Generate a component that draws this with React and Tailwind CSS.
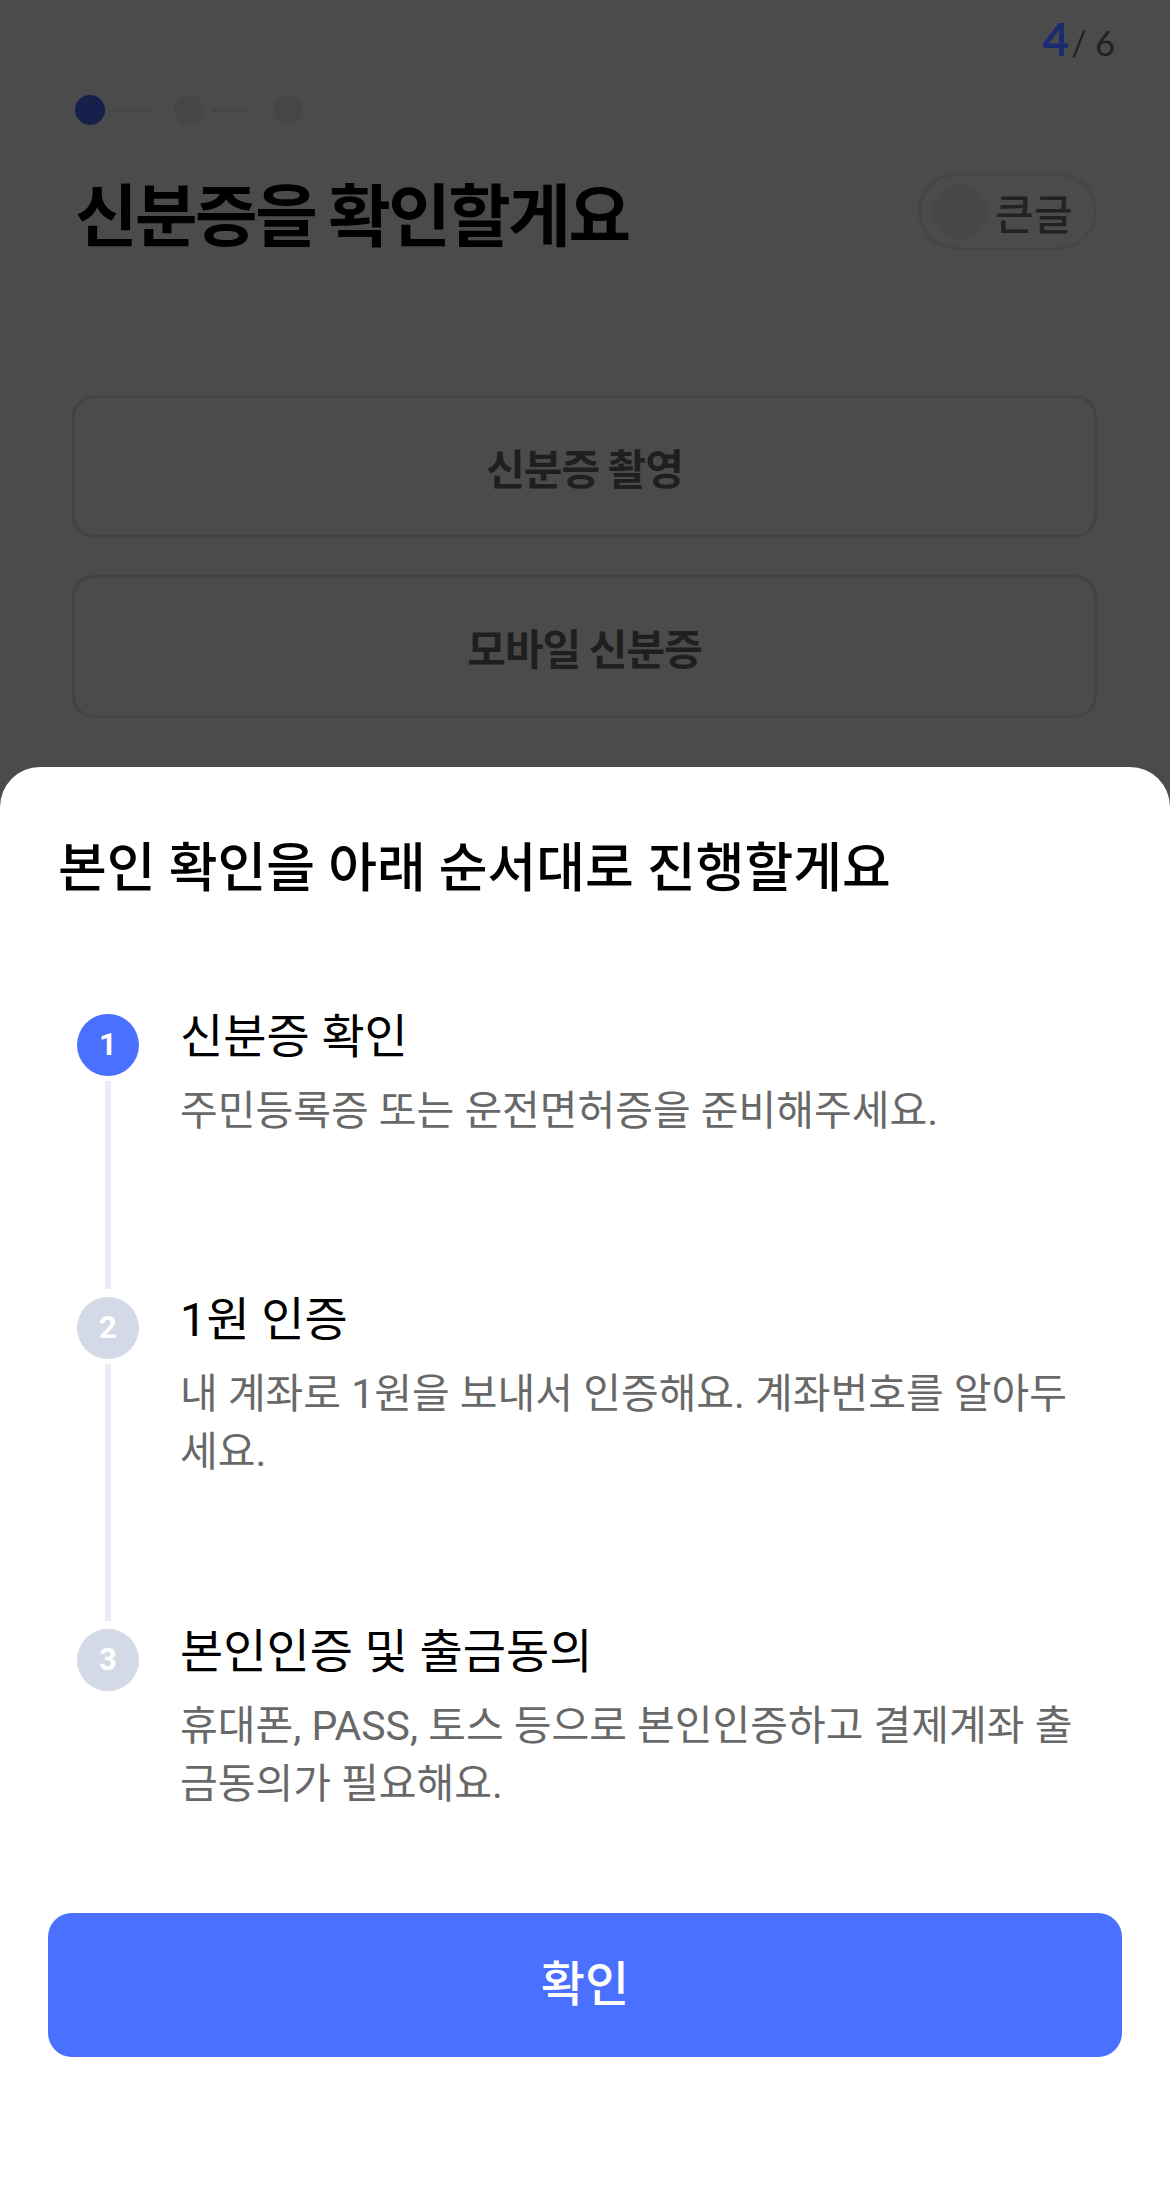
import React from "react";

const steps = [
  {
    n: 1,
    title: "신분증 확인",
    desc: "주민등록증 또는 운전면허증을 준비해주세요.",
    active: true,
    pad: "pb-[152px]",
  },
  {
    n: 2,
    title: "1원 인증",
    desc: "내 계좌로 1원을 보내서 인증해요. 계좌번호를 알아두세요.",
    pad: "pb-[143px]",
  },
  {
    n: 3,
    title: "본인인증 및 출금동의",
    desc: "휴대폰, PASS, 토스 등으로 본인인증하고 결제계좌 출금동의가 필요해요.",
    last: true,
    pad: "",
  },
];

function Progress() {
  return (
    <div className="flex items-center">
      <div className="w-[30px] h-[30px] rounded-full bg-[#16214b]" />
      <div className="w-[36px] h-[3px] ml-[9px] mr-[24px] bg-[#454545]" />
      <div className="w-[30px] h-[30px] rounded-full bg-[#464646]" />
      <div className="w-[36px] h-[3px] ml-[9px] mr-[24px] bg-[#454545]" />
      <div className="w-[30px] h-[30px] rounded-full bg-[#464646]" />
    </div>
  );
}

function Step({ step }) {
  return (
    <div className="flex">
      <div className="flex flex-col items-center w-[62px] shrink-0">
        <div
          className={`mt-[5px] w-[62px] h-[62px] rounded-full flex items-center justify-center text-white text-[31px] font-bold ${
            step.active ? "bg-[#4a70ff]" : "bg-[#d3d9e6]"
          }`}
        >
          {step.n}
        </div>
        {!step.last && (
          <div className="flex-1 w-[6px] mt-[5px] mb-[3px] bg-[#e9edf7]" />
        )}
      </div>
      <div className={`pl-[41px] ${step.pad}`}>
        <div className="h-[56px] text-[47px] leading-[56px] text-black">
          {step.title}
        </div>
        <div className="mt-[17px] text-[41px] leading-[58px] text-[#686868]">
          {step.desc}
        </div>
      </div>
    </div>
  );
}

export default function App() {
  return (
    <div className="relative w-[1170px] h-[2207px] overflow-hidden bg-[#4b4b4b] font-['Roboto','Noto_Sans_CJK_KR',sans-serif]">
      {/* dimmed page behind the sheet */}
      <div className="flex justify-end items-baseline pt-[16px] pr-[55px] font-['Lato',sans-serif]">
        <span className="text-[46px] font-bold text-[#1b2b70] leading-none">4</span>
        <span className="ml-[2px] text-[34px] text-[#222] leading-none">/ 6</span>
      </div>
      <div className="px-[75px]">
        <div className="mt-[33px]">
          <Progress />
        </div>
        <div className="mt-[48px] flex items-center justify-between">
          <h1 className="text-[68px] font-bold text-black tracking-[-2.5px] leading-none font-['Noto_Sans_CJK_KR',sans-serif]">
            신분증을 확인할게요
          </h1>
          <div className="mr-[-2px] w-[179px] h-[77px] rounded-full border-[3px] border-[#464646] flex items-center pl-[12px] gap-[8px]">
            <div className="w-[54px] h-[54px] rounded-full bg-[#474747]" />
            <span className="text-[42px] text-[#222] font-medium font-['Noto_Sans_CJK_KR',sans-serif]">
              큰글
            </span>
          </div>
        </div>
        <div className="mt-[145px] ml-[-3px] mr-[-2px] flex flex-col gap-[37px]">
          {["신분증 촬영", "모바일 신분증"].map((label) => (
            <div
              key={label}
              className="h-[143px] rounded-[22px] border-[3px] border-[#434343] flex items-center justify-center"
            >
              <span className="text-[42px] font-bold text-[#1f1f1f] tracking-[-1px] font-['Noto_Sans_CJK_KR',sans-serif]">
                {label}
              </span>
            </div>
          ))}
        </div>
      </div>

      {/* bottom sheet */}
      <div className="absolute left-0 right-0 bottom-0 h-[1440px] bg-white rounded-t-[40px] px-[48px] pt-[70px]">
        <h2 className="ml-[10px] text-[53px] font-medium leading-[64px] text-black">
          본인 확인을 아래 순서대로 진행할게요
        </h2>
        <div className="mt-[108px] ml-[29px] mr-[24px]">
          {steps.map((s) => (
            <Step key={s.n} step={s} />
          ))}
        </div>
        <button className="absolute left-[48px] right-[48px] bottom-[150px] h-[144px] rounded-[24px] bg-[#4a70ff] text-white text-[48px] font-medium">
          확인
        </button>
      </div>
    </div>
  );
}
